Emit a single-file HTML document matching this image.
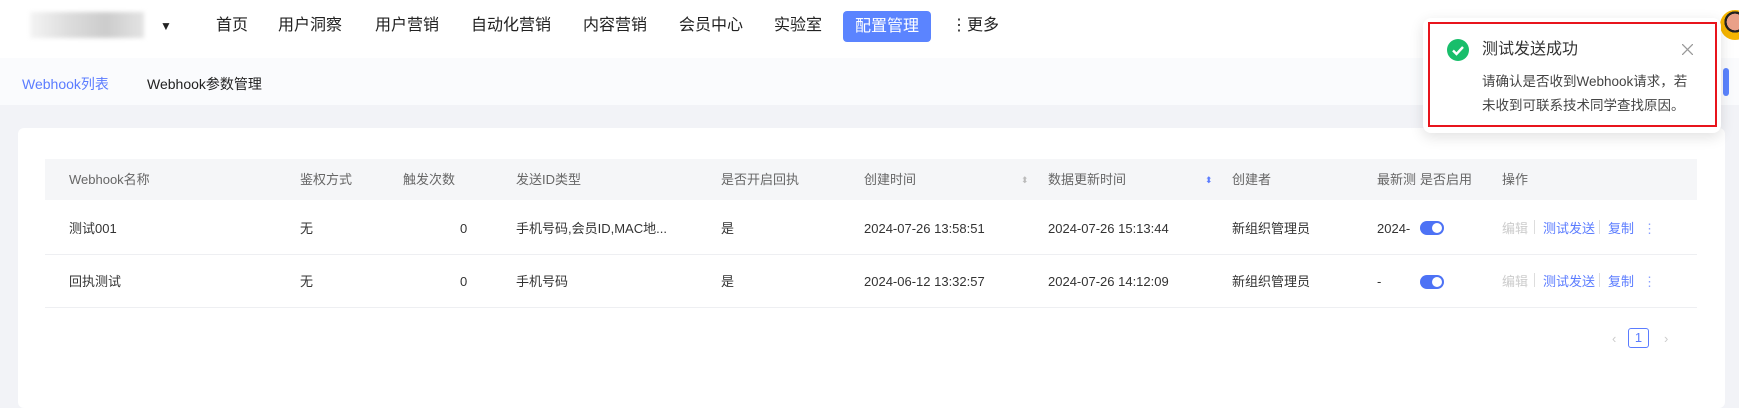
<!DOCTYPE html>
<html><head><meta charset="utf-8"><style>
*{margin:0;padding:0;box-sizing:border-box}
body{width:1739px;height:401px;overflow:hidden;background:#f2f3f7;font-family:"Liberation Sans","Noto Sans CJK SC",sans-serif;position:relative;color:#333}
.nav{position:absolute;left:0;top:0;width:1739px;height:58px;background:#fff;box-shadow:0 2px 6px rgba(0,0,0,.05)}
.nav span{position:absolute;top:15px;font-size:16px;color:#222;line-height:22px}
.btn{position:absolute;left:843px;top:11px;width:88px;height:31px;background:#5b84ff;border-radius:4px;color:#fff;font-size:16px;line-height:31px;text-align:center}
.sub{position:absolute;left:0;top:58px;width:1739px;height:47px;background:#fafbfd}
.sub span{position:absolute;top:16px;font-size:14px}
.card{position:absolute;left:18px;top:128px;width:1707px;height:280px;background:#fff;border-radius:6px}
.t{position:absolute;font-size:13px;line-height:16px;color:#333;white-space:nowrap}
.h{color:#666}
.hd{position:absolute;left:45px;top:159px;width:1652px;height:41px;background:#f5f6f8}
.line{position:absolute;left:45px;width:1652px;height:1px;background:#eeeff2}
.tg{position:absolute;left:1420px;width:24px;height:14px;border-radius:7px;background:#4d72f5}
.tg:after{content:"";position:absolute;right:2px;top:2px;width:10px;height:10px;border-radius:5px;background:#fff}
.toast{position:absolute;left:1423px;top:18px;width:298px;height:115px;background:#fff;border-radius:8px;box-shadow:0 4px 14px rgba(0,0,0,.12)}
.red{position:absolute;left:1428px;top:22px;width:289px;height:105px;border:2px solid #e8141c}
.sep{position:absolute;width:1px;height:14px;background:#ddd}
.blue{color:#5b7cff}
</style></head><body>
<div class="nav">
<div style="position:absolute;left:30px;top:12px;width:114px;height:26px;background:linear-gradient(90deg,#f4f4f4,#ddd,#ccc,#e4e4e4);filter:blur(2px)"></div>
<span style="left:160px;font-size:12px">▼</span>
<span style="left:216px">首页</span><span style="left:278px">用户洞察</span><span style="left:375px">用户营销</span><span style="left:471px">自动化营销</span><span style="left:583px">内容营销</span><span style="left:679px">会员中心</span><span style="left:774px">实验室</span>
<div class="btn">配置管理</div>
<span style="left:951px">⋮更多</span>
<div style="position:absolute;left:1720px;top:10px;width:30px;height:30px;border-radius:15px;background:radial-gradient(circle at 50% 40%,#e9a088 35%,#222 36%,#222 45%,#f5b400 46%)"></div>
</div>
<div class="sub"><span style="left:22px;color:#5b7cff">Webhook列表</span><span style="left:147px;color:#222">Webhook参数管理</span></div>
<div style="position:absolute;left:1723px;top:68px;width:6px;height:28px;background:#5b84ff;border-radius:3px"></div>
<div class="card"></div>
<div class="hd"></div>
<div class="line" style="top:254px"></div><div class="line" style="top:307px"></div>
<div class="t h" style="left:69px;top:172px">Webhook名称</div>
<div class="t h" style="left:300px;top:172px">鉴权方式</div>
<div class="t h" style="left:403px;top:172px">触发次数</div>
<div class="t h" style="left:516px;top:172px">发送ID类型</div>
<div class="t h" style="left:721px;top:172px">是否开启回执</div>
<div class="t h" style="left:864px;top:172px">创建时间</div>
<div class="t" style="left:1021px;top:172px;font-size:9px;color:#bbb">⬍</div>
<div class="t h" style="left:1048px;top:172px">数据更新时间</div>
<div class="t" style="left:1205px;top:172px;font-size:9px;color:#5b7cff">⬍</div>
<div class="t h" style="left:1232px;top:172px">创建者</div>
<div class="t h" style="left:1377px;top:172px">最新测</div>
<div class="t h" style="left:1420px;top:172px">是否启用</div>
<div class="t h" style="left:1502px;top:172px">操作</div>
<div class="t" style="left:69px;top:221px">测试001</div><div class="t" style="left:300px;top:221px">无</div><div class="t" style="left:460px;top:221px">0</div><div class="t" style="left:516px;top:221px">手机号码,会员ID,MAC地...</div><div class="t" style="left:721px;top:221px">是</div><div class="t" style="left:864px;top:221px">2024-07-26 13:58:51</div><div class="t" style="left:1048px;top:221px">2024-07-26 15:13:44</div><div class="t" style="left:1232px;top:221px">新组织管理员</div><div class="t" style="left:1377px;top:221px">2024-</div>
<div class="tg" style="top:221px"></div>
<div class="t" style="left:69px;top:274px">回执测试</div><div class="t" style="left:300px;top:274px">无</div><div class="t" style="left:460px;top:274px">0</div><div class="t" style="left:516px;top:274px">手机号码</div><div class="t" style="left:721px;top:274px">是</div><div class="t" style="left:864px;top:274px">2024-06-12 13:32:57</div><div class="t" style="left:1048px;top:274px">2024-07-26 14:12:09</div><div class="t" style="left:1232px;top:274px">新组织管理员</div><div class="t" style="left:1377px;top:274px">-</div>
<div class="tg" style="top:275px"></div>
<div class="t" style="left:1502px;top:221px;color:#ccc">编辑</div><div class="sep" style="left:1534px;top:220px"></div><div class="t blue" style="left:1543px;top:221px">测试发送</div><div class="sep" style="left:1599px;top:220px"></div><div class="t blue" style="left:1608px;top:221px">复制</div><div class="t" style="left:1643px;top:221px;color:#8aa0ff">⋮</div>
<div class="t" style="left:1502px;top:274px;color:#ccc">编辑</div><div class="sep" style="left:1534px;top:273px"></div><div class="t blue" style="left:1543px;top:274px">测试发送</div><div class="sep" style="left:1599px;top:273px"></div><div class="t blue" style="left:1608px;top:274px">复制</div><div class="t" style="left:1643px;top:274px;color:#8aa0ff">⋮</div>
<div class="t" style="left:1612px;top:331px;color:#ccc">‹</div>
<div style="position:absolute;left:1628px;top:328px;width:21px;height:20px;border:1px solid #5b7cff;border-radius:3px;color:#5b7cff;font-size:13px;text-align:center;line-height:18px">1</div>
<div class="t" style="left:1664px;top:331px;color:#ccc">›</div>
<div class="toast"></div>
<div class="red"></div>
<svg style="position:absolute;left:1447px;top:39px" width="22" height="22" viewBox="0 0 22 22"><circle cx="11" cy="11" r="11" fill="#19be6b"/><path d="M6 11.5l3.5 3.5L16 8" stroke="#fff" stroke-width="2.4" fill="none"/></svg>
<div class="t" style="left:1482px;top:40px;font-size:16px;line-height:20px;color:#333">测试发送成功</div>
<svg style="position:absolute;left:1682px;top:44px" width="11" height="11"><path d="M0 0L11 11M11 0L0 11" stroke="#999" stroke-width="1.3"/></svg>
<div class="t" style="left:1482px;top:70px;font-size:13.5px;line-height:24px;color:#444">请确认是否收到Webhook请求，若<br>未收到可联系技术同学查找原因。</div>
</body></html>
